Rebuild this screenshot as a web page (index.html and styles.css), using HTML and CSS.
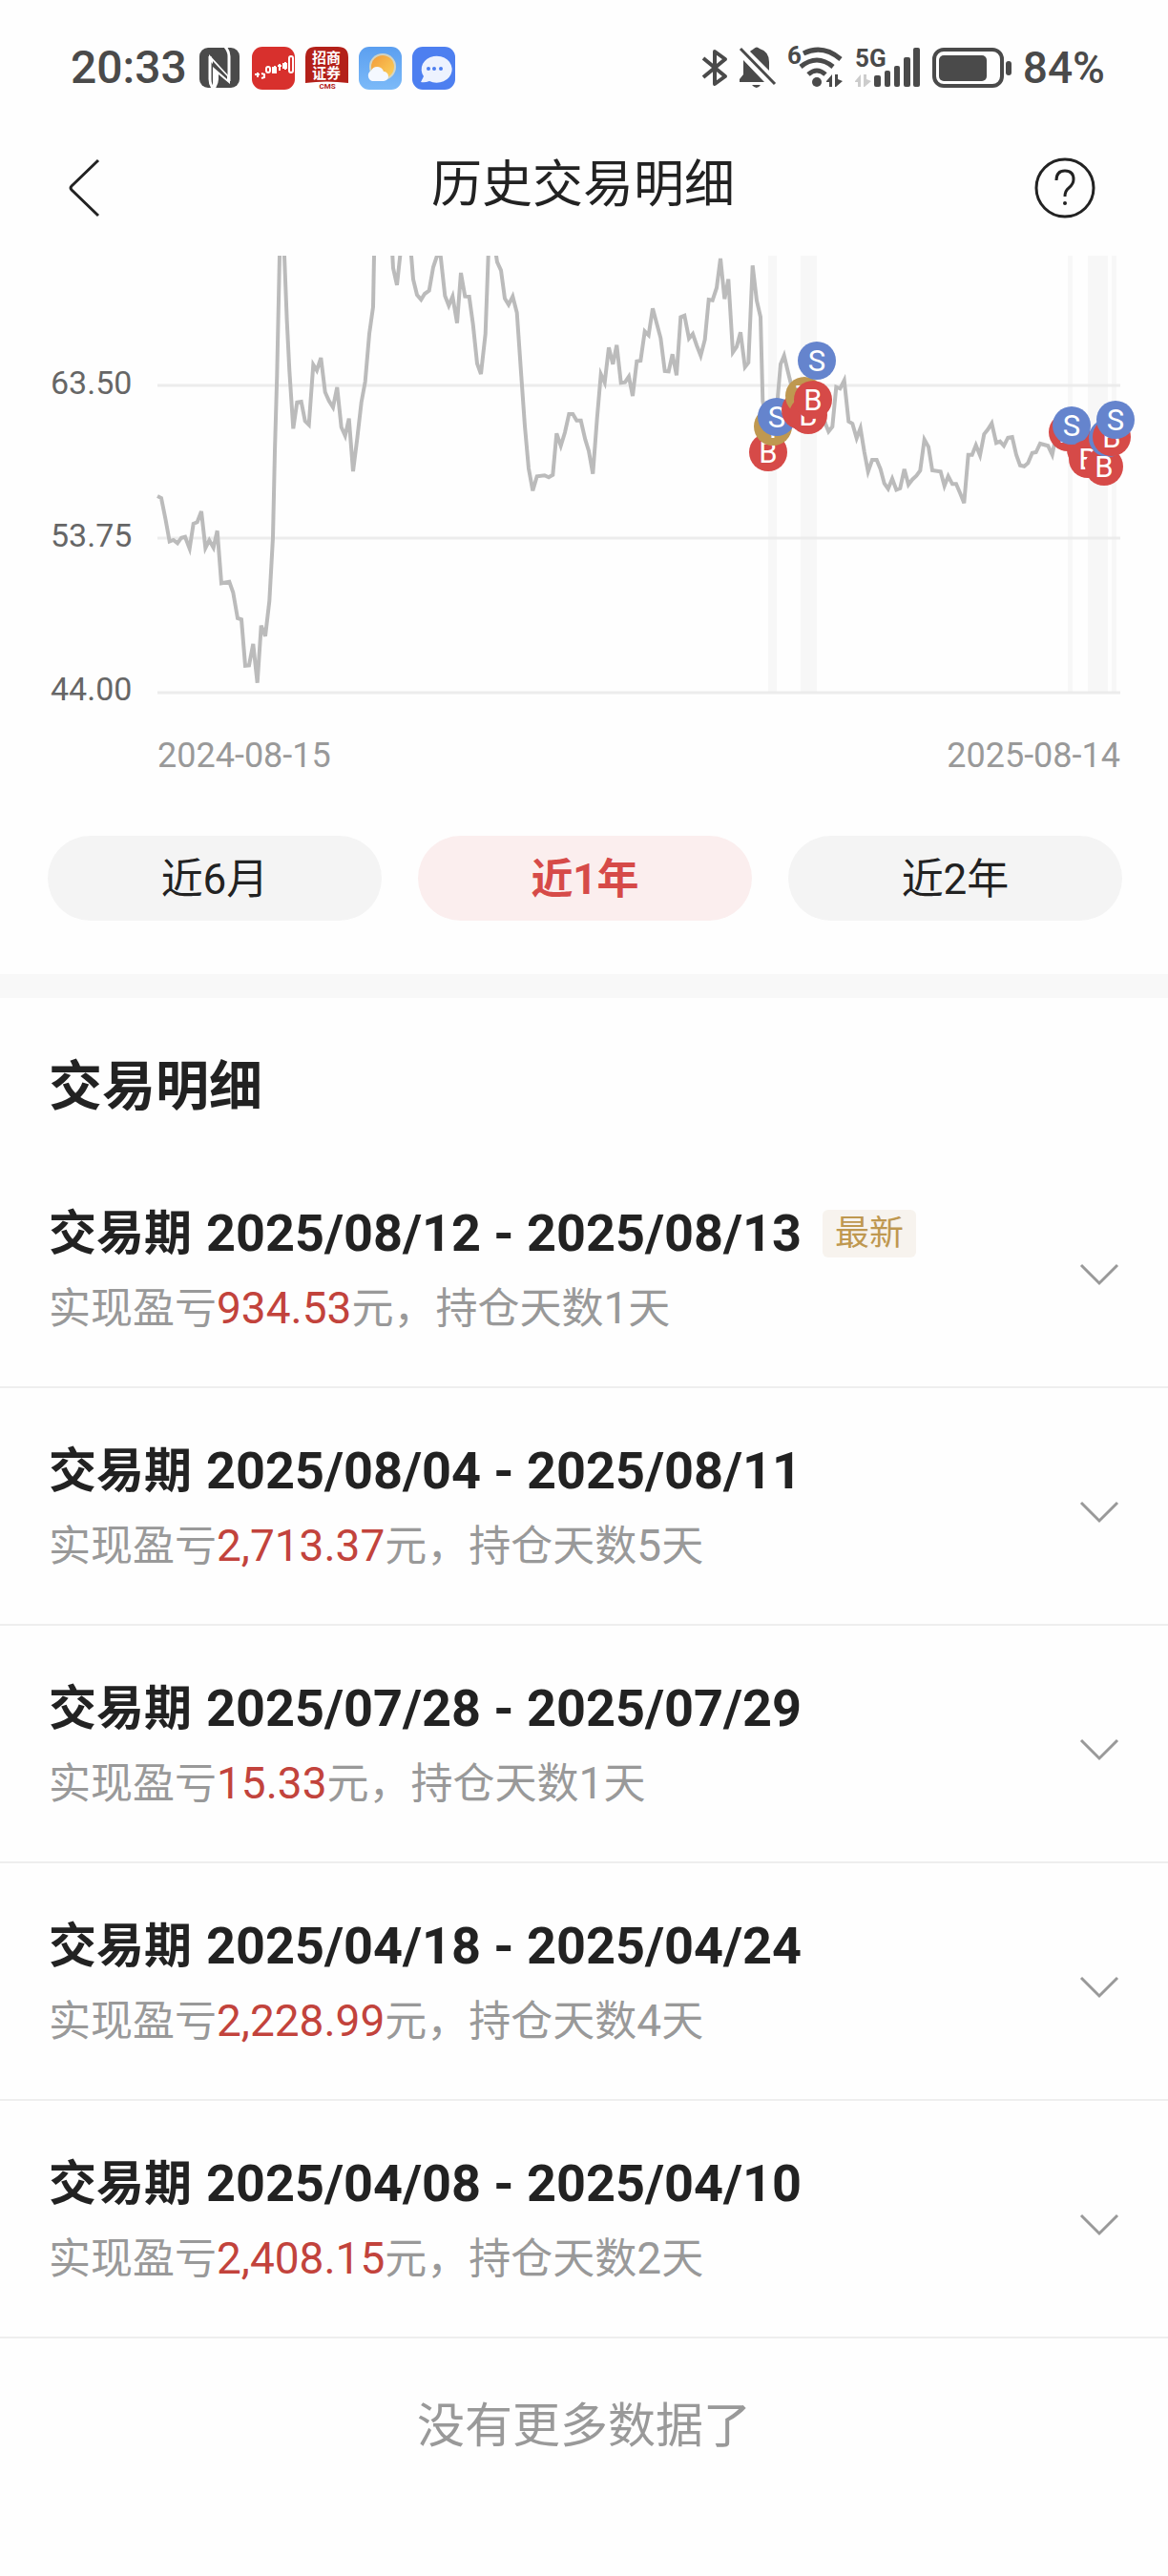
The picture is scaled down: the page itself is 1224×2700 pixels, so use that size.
FILE: index.html
```html
<!DOCTYPE html>
<html lang="zh-CN">
<head>
  <meta charset="UTF-8">
  <meta name="viewport" content="width=device-width, initial-scale=1">
  <title>历史交易明细</title>
  <link rel="stylesheet" href="styles.css">
</head>
<body>
  <!-- Status bar -->
  <div class="status">
    <div class="status-left">
      <span class="status-text">20:33</span>
      <svg class="nfc" width="42" height="42" viewBox="0 0 42 42" aria-hidden="true">
        <rect width="42" height="42" rx="9" fill="#4a4a4a"/>
        <path d="M11 9V33Q11 40 16 44M31 35V9Q31 3 26 -2" fill="none" stroke="#fefefe" stroke-width="3"/>
        <path d="M10 7L32 31V38L20 28V33Q20 38 16 44L14 40V17L10 13Z" fill="#fefefe"/>
        <path d="M14 14L29 30V33L14 20Z" fill="#4a4a4a"/>
      </svg>
      <svg class="app" viewBox="0 0 45 45" aria-hidden="true">
        <rect width="45" height="45" rx="11" fill="#d8302d"/>
        <g stroke="#fff" fill="#fff" stroke-width="2">
          <path d="M3 29h5M6 27v5M10 28l3 1v3l-3 1M24 20v8M29 18v7M27 20h4M35 16v8" fill="none"/>
          <rect x="15" y="21" width="4" height="6" rx="2" fill="none"/>
          <rect x="22" y="22" width="3" height="5"/>
          <rect x="33" y="18" width="3" height="4"/>
          <rect x="39" y="10" width="4" height="17" rx="2" fill="none"/>
        </g>
      </svg>
      <svg class="app" viewBox="0 0 45 45" aria-hidden="true">
        <path d="M0 38V11Q0 0 11 0H34Q45 0 45 11V38Q22 35 0 38Z" fill="#b32019"/>
        <text x="22" y="17" class="cms-cn">招商</text>
        <text x="22" y="33" class="cms-cn">证券</text>
        <text x="23" y="44" class="cms-en">CMS</text>
      </svg>
      <svg class="app" viewBox="0 0 45 45" aria-hidden="true">
        <defs>
          <linearGradient id="sky" x1="0" y1="0" x2="0" y2="1"><stop offset="0" stop-color="#5b9ff0"/><stop offset="1" stop-color="#7cbaf8"/></linearGradient>
          <linearGradient id="sun" x1="0" y1="0" x2="1" y2="1"><stop offset="0" stop-color="#f29a3a"/><stop offset="1" stop-color="#fbd35c"/></linearGradient>
        </defs>
        <rect width="45" height="45" rx="11" fill="url(#sky)"/>
        <circle cx="25" cy="21" r="14" fill="#ffe7b0" opacity=".7"/>
        <circle cx="25" cy="21" r="12" fill="url(#sun)"/>
        <path d="M14 36a6 6 0 0 1-1-11a7 7 0 0 1 13 1a5 5 0 0 1 0 10Z" fill="#f4f8ff"/>
      </svg>
      <svg class="app" viewBox="0 0 45 45" aria-hidden="true">
        <rect width="45" height="45" rx="11" fill="#4d7ff0"/>
        <path d="M9 37l3-6A16 14 0 1 1 18 36Q13 38 9 37Z" fill="#edf2fe"/>
        <circle cx="17" cy="23" r="2" fill="#4d7ff0"/><circle cx="23" cy="23" r="2" fill="#4d7ff0"/><circle cx="30" cy="23" r="2" fill="#4d7ff0"/>
      </svg>
    </div>
    <div class="status-right">
      <svg width="28" height="42" viewBox="0 0 28 42" aria-label="蓝牙">
        <path d="M2 11L25 30L14 38V4L25 12L2 31" fill="none" stroke="#4a4a4a" stroke-width="4" stroke-linejoin="round"/>
      </svg>
      <svg width="40" height="46" viewBox="0 0 40 46" aria-label="静音">
        <path d="M13 5Q15 4 16 3Q19 0 22 3Q32 6 32 17V26L12 6ZM5 15L27 38H1V35L5 30Z" fill="#4a4a4a"/>
        <path d="M2 3L38 40" stroke="#4a4a4a" stroke-width="3"/>
        <path d="M14 41h9q-4 6-9 0Z" fill="#4a4a4a"/>
      </svg>
      <svg width="60" height="46" viewBox="0 0 60 46" aria-label="Wi-Fi 6">
        <text x="0" y="19" class="net">6</text>
        <g fill="none" stroke="#4a4a4a" stroke-width="5">
          <path d="M17 8Q37-2 56 14"/><path d="M14 22Q31 8 48 22"/><path d="M22 30Q31 22 40 30"/>
        </g>
        <circle cx="31" cy="38" r="5" fill="#4a4a4a"/>
        <path d="M41 37L47 30V43H44V38H41ZM50 30H53V35L58 37L51 43H50Z" fill="#4a4a4a"/>
      </svg>
      <svg width="70" height="46" viewBox="0 0 70 46" aria-label="5G">
        <text x="0" y="22" class="net">5G</text>
        <path d="M0 37L6 30V43H3V38H0ZM9 30H12V35L17 37L10 43H9Z" fill="#ccc"/>
        <g fill="#4a4a4a">
          <rect x="20" y="31" width="7" height="12" rx="2"/><rect x="31" y="26" width="6" height="17" rx="2"/>
          <rect x="41" y="21" width="6" height="22" rx="2"/><rect x="51" y="12" width="7" height="31" rx="2"/>
          <rect x="61" y="2" width="7" height="41" rx="2"/>
        </g>
      </svg>
      <svg width="84" height="44" viewBox="0 0 84 44" aria-label="电量">
        <rect x="2" y="3" width="71" height="38" rx="10" fill="none" stroke="#4a4a4a" stroke-width="4"/>
        <rect x="7" y="9" width="50" height="27" rx="5" fill="#4a4a4a"/>
        <rect x="77" y="15" width="6" height="15" rx="3" fill="#4a4a4a"/>
      </svg>
      <span class="status-text battery-text">84%</span>
    </div>
  </div>

  <!-- Title bar -->
  <header class="header">
    <button class="icon-btn" aria-label="返回">
      <svg width="64" height="64" viewBox="0 0 64 64"><path d="M29 3L1 30Q-1 32 1 34L29 61" fill="none" stroke="#222" stroke-width="3"/></svg>
    </button>
    <h1>历史交易明细</h1>
    <button class="icon-btn" aria-label="帮助">
      <svg width="64" height="64" viewBox="0 0 64 64">
        <circle cx="32" cy="32" r="30" fill="none" stroke="#222" stroke-width="3"/>
        <path d="M23 24Q23 14 32 14Q41 14 41 23Q41 28 36 32Q32 35 32 41" fill="none" stroke="#222" stroke-width="3"/>
        <circle cx="32" cy="48" r="2" fill="#222"/>
      </svg>
    </button>
  </header>

  <main>
    <svg class="chart" viewBox="0 268 1224 560" role="img" aria-label="近1年价格走势">
      <g fill="#f7f7f7">
        <rect x="805" y="268" width="9" height="457"/>
        <rect x="839" y="268" width="17" height="457"/>
        <rect x="1119" y="268" width="5" height="457"/>
        <rect x="1140" y="268" width="21" height="457"/>
        <rect x="1165" y="268" width="5" height="457"/>
      </g>
      <path d="M165 404H1174M165 564H1174M165 726H1174" stroke="#ececec" stroke-width="3"/>
      <g class="axis-y">
        <text x="53" y="413">63.50</text>
        <text x="53" y="573">53.75</text>
        <text x="53" y="734">44.00</text>
      </g>
      <g class="axis-x">
        <text x="165" y="804">2024-08-15</text>
        <text x="1174" y="804" text-anchor="end">2025-08-14</text>
      </g>
      <!-- Price line -->
      <polyline class="price" points="165,520 169,522 173.3,543.3 177.7,567.5 181.7,566 186,569.3 190,563.7 194,562.7 198.7,575 202.7,549 206.7,547.3 211,536 215.3,574.3 219.3,566.3 223.7,574 227.7,556.3 232,611.3 240.3,609.7 244.3,621 249,648 253,649.3 257,697.7 261,697.3 265.3,675 269.7,715.7 273.7,655.7 278,666.7 282.3,630 286,563.3 288,473.3 290.3,393.3 293,268 295,200 298,268 300.7,336.7 303.3,388.3 307.3,449.3 311.3,421.7 315.7,421 319.7,441.3 323.7,445.3 328.3,382.3 332,388.3 336.3,375 340.7,411 344.7,420 349,427 353.3,406 357.7,447.7 361.7,456.7 365.7,438.7 370,494 374.3,460 378.7,421.7 382.7,400 387,350 391,321.7 392,268 394,200 410,200 411.3,268 412,281 416,298.7 419.3,268 424,200 430,250 431,268 433,292.7 437,309 441.3,314 445,308 449.7,304.7 454,280 458,268 461.7,268 466.3,310 470.3,320.3 474.3,310.7 479,338.7 483,286 487.3,310.7 491.7,311 495.7,340 500,381 504,392 508.7,350 511.7,268 514,220 519,220 520,268 521,274.7 525,283.3 529,312.7 533,319.3 537.3,310.7 541.7,327.7 546,390 550,446.7 554,491 558.3,514.3 562.7,499.3 570.7,498.3 575,500.3 579.3,497.7 583.3,454.3 587.7,467.3 592,453.3 596.3,434 600.3,434 604.3,440.7 608.7,440.7 613.3,460.7 617,472.7 621.3,496.7 625.7,438.3 629.7,392.3 633.7,401 638,364.3 642.3,381.7 646.3,361.7 650.7,401.3 655,400.7 659,394.7 663,415 667.3,378.7 671.3,378 675.7,347.3 679.7,351.3 684,323.3 692.3,354.3 696.7,389 700.7,389.3 704.7,371.3 709,393.3 713.3,332.3 717.3,330.7 722,354.7 726,350 730,361.7 734.3,372.7 738.7,356 742.7,314 746.7,314.7 751,301.7 755,271 759.3,313.3 763.3,292.7 768,369.3 772,363.3 776,348.3 780.7,384.7 784.3,380 788.7,278.3 793,315 797,332.3 799.3,420 805,455 811,440 815,416.7 818,381.7 821.7,372.7 826,390.7 828.3,400 835,430 847,420 858,412 864.7,443.3 868.3,452.3 872.3,447.3 876.3,405.7 880.3,407.3 884.7,398.7 889.3,441.7 893.3,444 897.7,459.3 901.7,448.7 905.7,473.3 909.7,494.3 914,482 918.7,482 922.7,491.7 926.7,506.7 930.7,512.3 935,501.7 939.3,513.3 943.3,511.7 947.7,491.7 952,508 956,502.7 960.3,498.7 964.3,493.3 968.7,460.7 973,468.3 977,493 985.7,494.3 989.7,509.3 993.7,499 998,507.3 1002,507.3 1006.3,517.3 1010.3,527.3 1014.7,476.7 1018.7,476.7 1022.7,466.7 1027,477.3 1031.3,455 1035.3,450 1039.3,443.7 1044,464.3 1048,462.7 1052,467.3 1056.3,458.7 1060.7,458 1065,476.7 1069,487.7 1073.3,488.7 1077.3,485.3 1081.7,474.7 1085.7,474 1090,465 1098.3,467.3 1102.7,476.7 1105.3,463.3 1119,453"/>
      <!-- Buy / sell markers -->
      <g class="mark">
        <g class="buy"><circle cx="805" cy="474" r="20"/><text x="805" y="485">B</text></g>
        <g class="both"><circle cx="810" cy="447" r="20"/><text x="810" y="459">T</text></g>
        <g class="sell"><circle cx="814" cy="437" r="20"/><text x="814" y="448">S</text></g>
        <g class="buy"><circle cx="839" cy="430" r="20"/></g>
        <g class="both"><circle cx="843" cy="415" r="20"/><text x="843" y="426">T</text></g>
        <g class="buy"><circle cx="847" cy="435" r="20"/><text x="847" y="446">B</text></g>
        <g class="buy"><circle cx="852" cy="419" r="20"/><text x="852" y="430">B</text></g>
        <g class="sell"><circle cx="856" cy="378" r="20"/><text x="856" y="389">S</text></g>
        <g class="buy"><circle cx="1119" cy="453" r="20"/><text x="1119" y="464">B</text></g>
        <g class="buy"><circle cx="1138" cy="471" r="20"/></g>
        <g class="sell"><circle cx="1123" cy="446" r="20"/><text x="1123" y="457">S</text></g>
        <g class="buy"><circle cx="1140" cy="481" r="20"/><text x="1140" y="492">B</text></g>
        <g class="buy"><circle cx="1157" cy="489" r="20"/></g>
        <g class="sell"><circle cx="1161" cy="459" r="20"/></g>
        <g class="buy"><circle cx="1165" cy="458" r="20"/><text x="1165" y="469">B</text></g>
        <g class="buy"><text x="1157" y="500">B</text></g>
        <g class="sell"><circle cx="1169" cy="440" r="20"/><text x="1169" y="451">S</text></g>
      </g>
    </svg>

    <div class="tabs">
      <button>近6月</button>
      <button class="active">近1年</button>
      <button>近2年</button>
    </div>

    <section class="detail">
      <h2>交易明细</h2>
      <ul class="list">
        <li class="item">
          <div class="info">
            <h3>交易期 <span class="date">2025/08/12 - 2025/08/13</span><span class="badge">最新</span></h3>
            <p>实现盈亏<span class="profit">934.53</span>元，持仓天数<span class="num">1</span>天</p>
          </div>
          <button class="expand" aria-label="展开"><svg width="40" height="40" viewBox="0 0 40 40"><path d="M1 13L20 32L39 13"/></svg></button>
        </li>
        <li class="item">
          <div class="info">
            <h3>交易期 <span class="date">2025/08/04 - 2025/08/11</span></h3>
            <p>实现盈亏<span class="profit">2,713.37</span>元，持仓天数<span class="num">5</span>天</p>
          </div>
          <button class="expand" aria-label="展开"><svg width="40" height="40" viewBox="0 0 40 40"><path d="M1 13L20 32L39 13"/></svg></button>
        </li>
        <li class="item">
          <div class="info">
            <h3>交易期 <span class="date">2025/07/28 - 2025/07/29</span></h3>
            <p>实现盈亏<span class="profit">15.33</span>元，持仓天数<span class="num">1</span>天</p>
          </div>
          <button class="expand" aria-label="展开"><svg width="40" height="40" viewBox="0 0 40 40"><path d="M1 13L20 32L39 13"/></svg></button>
        </li>
        <li class="item">
          <div class="info">
            <h3>交易期 <span class="date">2025/04/18 - 2025/04/24</span></h3>
            <p>实现盈亏<span class="profit">2,228.99</span>元，持仓天数<span class="num">4</span>天</p>
          </div>
          <button class="expand" aria-label="展开"><svg width="40" height="40" viewBox="0 0 40 40"><path d="M1 13L20 32L39 13"/></svg></button>
        </li>
        <li class="item">
          <div class="info">
            <h3>交易期 <span class="date">2025/04/08 - 2025/04/10</span></h3>
            <p>实现盈亏<span class="profit">2,408.15</span>元，持仓天数<span class="num">2</span>天</p>
          </div>
          <button class="expand" aria-label="展开"><svg width="40" height="40" viewBox="0 0 40 40"><path d="M1 13L20 32L39 13"/></svg></button>
        </li>
      </ul>
    </section>
  </main>

  <footer>没有更多数据了</footer>
</body>
</html>
```

FILE: styles.css
```css
:root {
  --bg: #fefefe; --fg: #222; --muted: #999;
  --red: #d64a48; --blue: #6584cd; --gold: #bf9850;
}
*, *::before, *::after { box-sizing: border-box; }
body {
  margin: 0; background: var(--bg); color: var(--fg);
  font-family: Roboto, "Noto Sans CJK SC", sans-serif;
}
h1, h2, h3, p, ul { margin: 0; padding: 0; }
button {
  border: none; background: none; padding: 0;
  font: inherit; color: inherit; cursor: pointer;
}
svg { display: block; overflow: visible; }
/* Status bar */
.status {
  display: flex; justify-content: space-between; align-items: center;
  height: 142px; padding: 0 66px 0 74px;
}
.status-left, .status-right { display: flex; align-items: center; gap: 11px; }
.status-text { font-size: 48px; font-weight: 500; line-height: 56px; color: #4a4a4a; }
.battery-text { font-size: 46px; }
.nfc { margin: 0 2px; overflow: hidden; }
.app { width: 45px; height: 45px; }
.cms-cn { font-size: 15px; font-weight: 700; fill: #fff; text-anchor: middle; }
.cms-en { font-size: 8px; font-weight: 700; fill: #b32019; text-anchor: middle; }
.net { font-size: 26px; font-weight: 700; fill: #4a4a4a; }
/* Header */
.header {
  display: flex; justify-content: space-between; align-items: center;
  height: 110px; margin-bottom: 16px; padding: 0 76px 0 74px;
}
.header h1 { font-size: 53px; font-weight: 400; line-height: 64px; padding-bottom: 6px; }
/* Chart */
.chart { width: 100%; height: auto; overflow: hidden; }
.axis-y { font-size: 34px; fill: #666; }
.axis-x { font-size: 36px; fill: var(--muted); }
.price { fill: none; stroke: #bbb; stroke-width: 4; }
.mark text { font-size: 31px; fill: #fff; text-anchor: middle; }
.buy { fill: var(--red); }
.sell { fill: var(--blue); }
.both { fill: var(--gold); }
/* Tabs */
.tabs {
  display: grid; grid-template-columns: repeat(3, 1fr); gap: 38px;
  padding: 48px 48px 56px 50px;
}
.tabs button {
  height: 89px; padding-bottom: 6px; border-radius: 45px;
  background: #f4f4f4; font-size: 44px;
}
.tabs .active { background: #fbeeee; color: var(--red); font-weight: 700; }
/* Trade list */
.detail { border-top: 25px solid #f8f8f8; }
.detail h2 { padding: 61px 51px 35px; font-size: 56px; line-height: 64px; }
.list { list-style: none; }
.item {
  display: flex; justify-content: space-between; align-items: center;
  padding: 55px 52px 49px 51px; border-bottom: 2px solid #eee;
}
.info { display: grid; gap: 15px; }
.item h3 { display: flex; align-items: center; font-size: 50px; line-height: 64px; }
.item p { font-size: 44px; line-height: 64px; color: var(--muted); }
.date { margin-left: 15px; font-size: 54px; }
.badge {
  margin-left: 22px; padding: 0 13px; border-radius: 6px;
  background: #f7f3ee; color: var(--gold);
  font-size: 36px; font-weight: 400; line-height: 50px;
}
.profit, .num { font-size: 46px; line-height: 46px; }
.profit { color: #c2433c; }
.expand path { fill: none; stroke: var(--muted); stroke-width: 3; }
/* Footer */
footer {
  padding: 60px 0 90px; text-align: center;
  font-size: 50px; line-height: 64px; color: var(--muted);
}
```
